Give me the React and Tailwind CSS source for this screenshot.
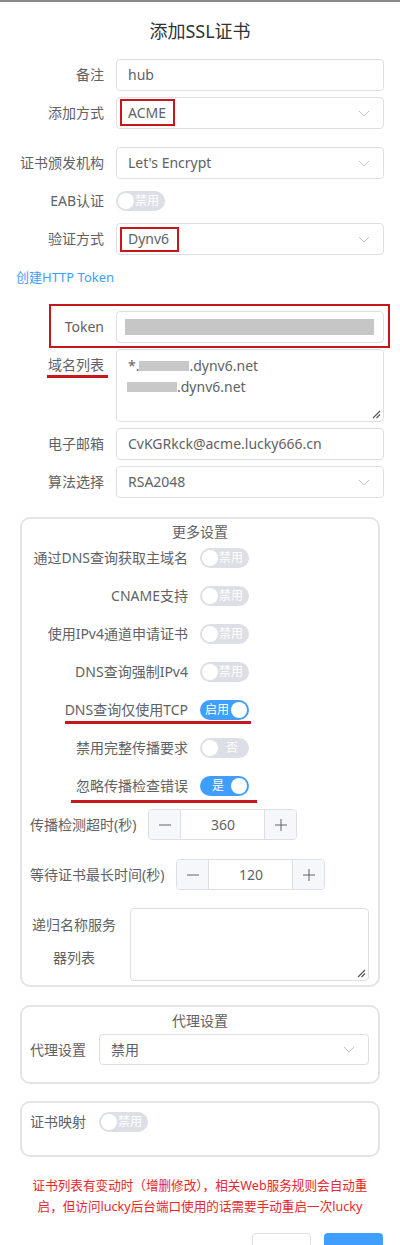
import React from "react";

// 表单里反复用到的几个小部件
function Chevron() {
  return (
    <svg width="12" height="7" viewBox="0 0 12 7" fill="none" className="shrink-0">
      <path d="M1 1l5 5 5-5" stroke="#c0c4cc" strokeWidth="1" />
    </svg>
  );
}

function Resize() {
  return (
    <svg width="9" height="9" viewBox="0 0 9 9" className="absolute bottom-[2px] right-[2px]">
      <path d="M8 1L1 8M8 4.5L4.5 8" stroke="#555" strokeWidth="1.2" />
    </svg>
  );
}

function Switch({ on, text, textClass }) {
  return (
    <div className={`relative h-5 w-[49px] shrink-0 rounded-full ${on ? "bg-[#409eff]" : "bg-[#dcdfe6]"}`}>
      <span className={`absolute top-[2px] h-4 w-4 rounded-full bg-white ${on ? "right-[2px]" : "left-[2px]"}`} />
      <span className={`absolute top-0 h-5 text-xs leading-5 text-white ${textClass}`}>{text}</span>
    </div>
  );
}

function Row({ label, children, className = "" }) {
  return (
    <div className={`relative flex items-center ${className}`}>
      <div className="w-[116px] shrink-0 pr-3 text-right text-sm text-[#606266]">{label}</div>
      <div className="w-[268px]">{children}</div>
    </div>
  );
}

function Input({ children, select, className = "" }) {
  return (
    <div className={`relative flex h-8 items-center justify-between rounded border border-[#dcdfe6] pl-[11px] pr-[13px] text-sm text-[#606266] ${className}`}>
      <span>{children}</span>
      {select && <Chevron />}
    </div>
  );
}

function SwitchRow({ label, on, text, textClass, className = "", children }) {
  return (
    <div className={`relative flex h-5 items-center ${className}`}>
      <div className="w-[178px] shrink-0 pr-3 text-right text-sm text-[#606266]">{label}</div>
      <Switch on={on} text={text} textClass={textClass} />
      {children}
    </div>
  );
}

function NumberInput({ value }) {
  return (
    <div className="flex h-[31px] w-[149px] overflow-hidden rounded border border-[#dcdfe6] text-sm text-[#606266]">
      <div className="flex w-8 items-center justify-center border-r border-[#dcdfe6] bg-[#f5f7fa]">
        <svg width="12" height="12" viewBox="0 0 12 12">
          <path d="M0 6h12" stroke="#606266" strokeWidth="1" />
        </svg>
      </div>
      <div className="flex flex-1 items-center justify-center">{value}</div>
      <div className="flex w-8 items-center justify-center border-l border-[#dcdfe6] bg-[#f5f7fa]">
        <svg width="12" height="12" viewBox="0 0 12 12">
          <path d="M0 6h12M6 0v12" stroke="#606266" strokeWidth="1" />
        </svg>
      </div>
    </div>
  );
}

export default function App() {
  return (
    <div className="min-h-screen w-[400px] bg-white font-['Noto_Sans','Noto_Sans_CJK_SC',sans-serif] text-[#606266]">
      <div className="h-[2px] bg-[#8a8a8a]" />
      <div className="flex h-[57px] items-center justify-center text-lg text-[#303133]">添加SSL证书</div>

      <Row label="备注">
        <Input>hub</Input>
      </Row>
      <Row label="添加方式" className="mt-[6px]">
        <Input select>
          ACME
          <span className="absolute left-[3px] top-[1px] h-[27px] w-[55px] border-2 border-[#c8161d]" />
        </Input>
      </Row>
      <Row label="证书颁发机构" className="mt-[18px]">
        <Input select>Let's Encrypt</Input>
      </Row>
      <Row label="EAB认证" className="mt-[6px] h-8">
        <Switch on={false} text="禁用" textClass="right-[6px]" />
      </Row>
      <Row label="验证方式" className="mt-[6px]">
        <Input select>
          Dynv6
          <span className="absolute left-[3px] top-[3px] h-[25px] w-[59px] border-2 border-[#c8161d]" />
        </Input>
      </Row>
      <div className="mt-[12px] h-5 pl-4 text-[13px] leading-5 text-[#409eff]">创建HTTP Token</div>

      <Row label="Token" className="mt-[24px]">
        <div className="flex h-8 items-center rounded border border-[#dcdfe6] pl-2">
          <div className="h-4 w-[249px] bg-[#c6c6c6]" />
        </div>
        <span className="absolute left-[49px] top-[-7px] h-[44px] w-[341px] border-[2.5px] border-[#c8161d]" />
      </Row>
      <div className="relative mt-[6px] flex items-start">
        <div className="w-[116px] shrink-0 pr-3 pt-[5px] text-right text-sm leading-[21px] text-[#606266]">域名列表</div>
        <div className="relative h-[73px] w-[268px] rounded border border-[#dcdfe6] pl-[11px] pt-[5px] text-sm leading-[21px] text-[#606266]">
          <div className="flex items-center">
            *.<span className="inline-block h-[10px] w-[50px] bg-[#c8c8c8]" />.dynv6.net
          </div>
          <div className="flex items-center">
            <span className="-ml-[1px] inline-block h-[10px] w-[50px] bg-[#c8c8c8]" />.dynv6.net
          </div>
          <Resize />
        </div>
        <span className="absolute left-[47px] top-[26px] h-[3px] w-[61px] bg-[#c8161d]" />
      </div>
      <Row label="电子邮箱" className="mt-[6px]">
        <Input>CvKGRkck@acme.lucky666.cn</Input>
      </Row>
      <Row label="算法选择" className="mt-[6px]">
        <Input select>RSA2048</Input>
      </Row>

      {/* 更多设置 */}
      <div className="mx-5 mt-[19px] rounded-[10px] border-2 border-[#e2e4e8] pb-[4px]">
        <div className="mt-[3px] h-5 text-center text-sm leading-5 text-[#606266]">更多设置</div>
        <SwitchRow label="通过DNS查询获取主域名" text="禁用" textClass="right-[6px]" className="mt-[6px]" />
        <SwitchRow label="CNAME支持" text="禁用" textClass="right-[6px]" className="mt-[18px]" />
        <SwitchRow label="使用IPv4通道申请证书" text="禁用" textClass="right-[6px]" className="mt-[18px]" />
        <SwitchRow label="DNS查询强制IPv4" text="禁用" textClass="right-[6px]" className="mt-[18px]" />
        <SwitchRow label="DNS查询仅使用TCP" on text="启用" textClass="left-[5px]" className="mt-[18px]">
          <span className="absolute left-[43px] top-[21px] h-[3px] w-[186px] bg-[#c8161d]" />
        </SwitchRow>
        <SwitchRow label="禁用完整传播要求" text="否" textClass="right-[11px]" className="mt-[18px]" />
        <SwitchRow label="忽略传播检查错误" on text="是" textClass="left-[12px]" className="mt-[18px]">
          <span className="absolute left-[49px] top-[24px] h-[3px] w-[186px] bg-[#c8161d]" />
        </SwitchRow>

        <div className="mt-[13px] flex items-center gap-3 pl-2">
          <span className="text-sm">传播检测超时(秒)</span>
          <NumberInput value="360" />
        </div>
        <div className="mt-[19px] flex items-center gap-3 pl-2">
          <span className="text-sm">等待证书最长时间(秒)</span>
          <NumberInput value="120" />
        </div>
        <div className="mt-[18px] flex items-start gap-3 pl-2">
          <div className="w-[88px] shrink-0 text-center text-sm leading-[33px]">递归名称服务器列表</div>
          <div className="relative h-[73px] w-[239px] rounded border border-[#dcdfe6]">
            <Resize />
          </div>
        </div>
      </div>

      {/* 代理设置 */}
      <div className="mx-5 mt-[18px] rounded-[10px] border-2 border-[#e2e4e8] pb-[17px]">
        <div className="mt-[4px] h-5 text-center text-sm leading-5">代理设置</div>
        <div className="mt-[3px] flex items-center gap-[13px] pl-2">
          <span className="w-14 text-sm">代理设置</span>
          <div className="flex h-[31px] w-[270px] items-center justify-between rounded border border-[#dcdfe6] pl-[11px] pr-[13px] text-sm">
            <span>禁用</span>
            <Chevron />
          </div>
        </div>
      </div>

      {/* 证书映射 */}
      <div className="mx-5 mt-[17px] rounded-[10px] border-2 border-[#e2e4e8] pb-[23px]">
        <div className="mt-[9px] flex h-5 items-center gap-[13px] pl-2">
          <span className="w-14 text-sm">证书映射</span>
          <Switch on={false} text="禁用" textClass="right-[6px]" />
        </div>
      </div>

      <div className="mt-[18px] text-center text-[12.6px] leading-[21px] text-[#e8262b]">
        证书列表有变动时（增删修改），相关Web服务规则会自动重
        <br />
        启，但访问lucky后台端口使用的话需要手动重启一次lucky
      </div>

      {/* 底部按钮，截图只露出上沿 */}
      <div className="mt-[16px] flex justify-end gap-[13px] pr-[17px]">
        <button aria-label="取消" className="h-8 w-[59px] rounded border border-[#dcdfe6] bg-white" />
        <button aria-label="确定" className="h-8 w-[59px] rounded bg-[#409eff]" />
      </div>
    </div>
  );
}
